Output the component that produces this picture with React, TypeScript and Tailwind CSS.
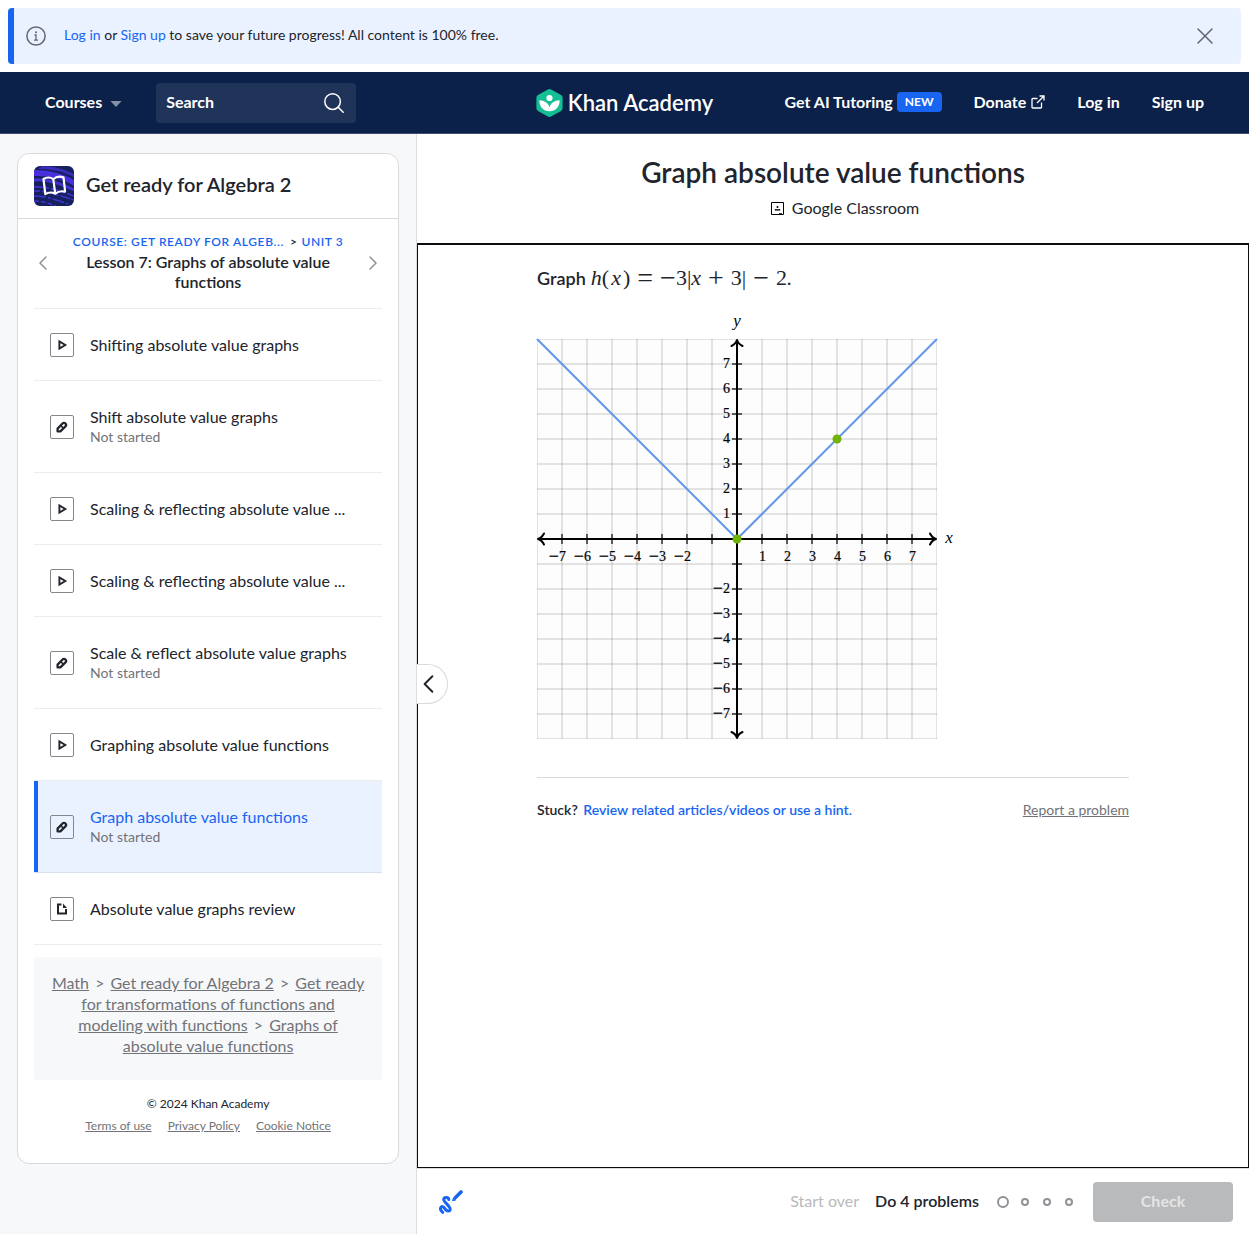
import React from "react";

type Kind = "video" | "exercise" | "article";

interface Lesson {
  title: string;
  kind: Kind;
  status?: string;
  active?: boolean;
}

const lessons: Lesson[] = [
  { title: "Shifting absolute value graphs", kind: "video" },
  { title: "Shift absolute value graphs", kind: "exercise", status: "Not started" },
  { title: "Scaling & reflecting absolute value ...", kind: "video" },
  { title: "Scaling & reflecting absolute value ...", kind: "video" },
  { title: "Scale & reflect absolute value graphs", kind: "exercise", status: "Not started" },
  { title: "Graphing absolute value functions", kind: "video" },
  { title: "Graph absolute value functions", kind: "exercise", status: "Not started", active: true },
  { title: "Absolute value graphs review", kind: "article" },
];

function Banner() {
  return (
    <div className="p-2">
      <div className="flex h-14 items-center rounded border-l-[6px] border-[#1865f2] bg-[#ebf2ff] pl-3 pr-6">
        <svg className="mr-[18px] size-5 shrink-0" viewBox="0 0 20 20" fill="none" stroke="#63656c" aria-hidden="true">
          <circle cx="10" cy="10" r="9.1" strokeWidth="1.5" />
          <path d="M8.5 9H10v5M8 14.2h4" strokeWidth="1.3" />
          <circle cx="10" cy="6.2" r="1" fill="#63656c" stroke="none" />
        </svg>
        <p className="flex-1 pb-0.5 text-sm">
          <a href="#login" className="text-[#1865f2]">Log in</a> or{" "}
          <a href="#signup" className="text-[#1865f2]">Sign up</a> to save your future progress! All content is 100% free.
        </p>
        <button aria-label="Dismiss" className="flex size-6 items-center justify-center">
          <svg className="size-4" viewBox="0 0 16 16" fill="none" stroke="#63656c" strokeWidth="1.5" strokeLinecap="round" aria-hidden="true">
            <path d="M1 1l14 14M15 1L1 15" />
          </svg>
        </button>
      </div>
    </div>
  );
}

function Header() {
  return (
    <header className="grid h-[62px] grid-cols-[1fr_auto_1fr] items-center border-b border-[#3d4d6e] bg-[#0c2149] px-[45px] text-base font-bold text-white">
      <div className="flex items-center">
        <button className="flex items-center gap-2 pb-0.5 font-bold">
          Courses
          <svg className="mt-1 h-[6px] w-3" viewBox="0 0 12 6" fill="#8590a4" aria-hidden="true">
            <path d="M0.4 0h11.2L6.5 5.6a.7.7 0 0 1-1 0z" />
          </svg>
        </button>
        <div className="ml-[34px] flex h-10 w-[200px] items-center rounded bg-[#203358] pl-[10px] pr-3">
          <input
            type="text"
            aria-label="Search"
            placeholder="Search"
            className="min-w-0 flex-1 bg-transparent pb-0.5 font-bold text-white outline-none placeholder:text-white"
          />
          <svg className="size-5" viewBox="0 0 20 20" fill="none" stroke="#fff" strokeWidth="1.5" strokeLinecap="round" aria-hidden="true">
            <circle cx="8.6" cy="8.6" r="7.8" />
            <path d="M14.2 14.2l5 5" />
          </svg>
        </div>
      </div>
      <a href="#home" className="flex items-center gap-[5px] text-[22px] font-semibold leading-7">
        <svg className="h-[28px] w-[27px]" viewBox="0 0 27 28" aria-hidden="true">
          <path d="M11.9 .5a3.2 3.2 0 0 1 3.2 0L25 6.1a3 3 0 0 1 1.6 2.7v10.4a3 3 0 0 1-1.6 2.7l-9.9 5.6a3.2 3.2 0 0 1-3.2 0L2 21.9A3 3 0 0 1 .4 19.200V8.800A3 3 0 0 1 2 6.100z" fill="#14bf96" />
          <circle cx="13.500" cy="9" r="3.100" fill="#fff" />
          <path d="M23.600 11.300c.4 6.200-3.900 11-10.100 11S3 17.500 3.400 11.300c5 .2 9 2.700 10.100 7.200 1.100-4.500 5.100-7 10.100-7.200z" fill="#fff" />
        </svg>
        Khan Academy
      </a>
      <nav className="flex items-center justify-end gap-8 pb-0.5">
        <a href="#tutoring" className="flex items-center gap-1">
          Get AI Tutoring
          <span className="rounded bg-[#1865f2] px-2 text-xs leading-5">NEW</span>
        </a>
        <a href="#donate" className="flex items-center gap-[5px]">
          Donate
          <svg className="size-[14px]" viewBox="0 0 14 14" fill="none" stroke="#fff" strokeWidth="1.300" aria-hidden="true">
            <path d="M6.500 3.500H1.700a.7.700 0 0 0-.7.700v8.100a.7.700 0 0 0 .7.700h8.100a.7.700 0 0 0 .7-.7V7.500M8.500 1H13v4.500M13 1L6 8" />
          </svg>
        </a>
        <a href="#login">Log in</a>
        <a href="#signup">Sign up</a>
      </nav>
    </header>
  );
}

function CourseIcon() {
  return (
    <svg className="size-10 shrink-0 rounded-md" viewBox="0 0 40 40" aria-hidden="true">
      <rect width="40" height="40" fill="#14215c" />
      <path d="M0 4c14 0 28 3 40 10v6C28 12 14 10 0 10z" fill="#4a30dd" />
      <path d="M8 0c12 0 22 3 32 8v3C28 5 16 3 4 3z" fill="#3a2bb8" />
      <g fill="none" stroke="#4430cf" strokeWidth="1.600">
        <path d="M0 14c10-1 24 2 40 10" strokeWidth="3" />
        <path d="M0 21c12-1 26 4 40 9" strokeDasharray="9 1 5 2" />
        <path d="M0 25c12 0 24 4 40 9" strokeDasharray="6 2 10 1" />
        <path d="M0 30c10 0 20 3 34 8" strokeDasharray="12 2 3 2" />
        <path d="M0 35c8 0 14 2 22 5" strokeDasharray="5 2" />
      </g>
      <path d="M9.500 13.500c3-1.800 7-1.800 9.800.2 2.600-2.400 6.400-3.200 10.200-1.800l1.600 14.300c-3.600-1-7-.3-9.800 2-3.200-1.700-6.700-1.500-10 .4zM19.300 13.700l1.900 14.500" transform="translate(0 -.5)" fill="none" stroke="#fff" strokeWidth="2.200" strokeLinejoin="round" />
    </svg>
  );
}

function KindIcon({ kind }: { kind: Kind }) {
  return (
    <span className="flex size-6 shrink-0 items-center justify-center rounded-xs border border-[#85878c]">
      <svg className="size-3" viewBox="0 0 12 12" fill="none" stroke="#21242c" strokeWidth="2" aria-hidden="true">
        {kind === "video" && <path d="M3.400 2.500v7L9.300 6z" strokeWidth="1.900" />}
        {kind === "exercise" && (
          <>
            <path d="M1.600 10.400V7.600l5.200-5.300a1.600 1.600 0 0 1 2.300 0l.6.6a1.600 1.600 0 0 1 0 2.300l-5.300 5.200z" strokeWidth="2.300" strokeLinejoin="round" />
            <path d="M4.800 4.600l2.600 2.600" strokeWidth="1.500" />
          </>
        )}
        {kind === "article" && (
          <>
            <path d="M5.500 1.500H2v9h8V6" />
            <path d="M7 .5L11 5H7z" fill="#21242c" stroke="none" />
          </>
        )}
      </svg>
    </span>
  );
}

function Chevron({ left, className }: { left?: boolean; className: string }) {
  return (
    <svg className={className} viewBox="0 0 8 14" fill="none" stroke="currentColor" strokeWidth="1.500" strokeLinecap="round" strokeLinejoin="round" aria-hidden="true">
      <path d={left ? "M7 1L1 7l6 6" : "M1 1l6 6-6 6"} />
    </svg>
  );
}

function Separator() {
  return <span className="mx-0.5">&gt;</span>;
}

function Sidebar() {
  return (
    <aside className="w-[33.4%] shrink-0 border-r border-[#dcdde0] bg-[#f7f8fa] px-[17px] pb-16 pt-[19px]">
      <div className="rounded-xl border border-[#d8dadd] bg-white pb-[26px]">
        <div className="flex h-[65px] items-center gap-3 border-b border-[#d8dadd] px-4">
          <CourseIcon />
          <h2 className="pb-1 text-xl font-semibold">Get ready for Algebra 2</h2>
        </div>
        <div className="px-4">
          <div className="flex h-[89px] items-center justify-between px-[5px] pb-0.5 text-[#909298]">
            <button aria-label="Previous lesson"><Chevron left className="h-[14px] w-2" /></button>
            <div className="w-[276px] pb-0.5 text-center text-base font-semibold leading-5 text-[#21242c]">
              <div className="whitespace-nowrap text-xs leading-5 tracking-wider">
                <a href="#course" className="text-[#1865f2]">COURSE: GET READY FOR ALGEB...</a>
                <span className="ml-1.5 mr-1">&gt;</span>
                <a href="#unit" className="text-[#1865f2]">UNIT 3</a>
              </div>
              Lesson 7: Graphs of absolute value functions
            </div>
            <button aria-label="Next lesson"><Chevron className="h-[14px] w-2" /></button>
          </div>
          <ul className="border-t border-[#ececee]">
            {lessons.map((l, i) => (
              <li
                key={i}
                className={
                  l.active
                    ? "border-b border-[#d8dfee] bg-[#ebf2ff] shadow-[inset_4px_0_0_#1865f2]"
                    : "border-b border-[#ececee]"
                }
              >
                <a
                  href={"#lesson-" + i}
                  className={l.status ? "flex min-h-[91px] items-center gap-4 px-4" : "flex min-h-[71px] items-center gap-4 px-4"}
                >
                  <KindIcon kind={l.kind} />
                  <span className="min-w-0 flex-1 whitespace-nowrap">
                    <span className={l.active ? "block text-base leading-5 text-[#1865f2]" : "block text-base leading-5"}>{l.title}</span>
                    {l.status && <span className="block text-sm leading-5 text-[#717378]">{l.status}</span>}
                  </span>
                </a>
              </li>
            ))}
          </ul>
          <nav aria-label="Breadcrumb" className="mt-3 rounded bg-[#f7f8fa] px-4 pb-6 pt-[15px] text-center text-base leading-[21px] text-[#717378]">
            <a href="#math" className="underline">Math</a> <Separator />{" "}
            <a href="#algebra" className="underline">Get ready for Algebra 2</a> <Separator />{" "}
            <a href="#transformations" className="underline">Get ready for transformations of functions and modeling with functions</a>{" "}
            <Separator /> <a href="#graphs" className="underline">Graphs of absolute value functions</a>
          </nav>
          <footer className="mt-[13px] text-center text-xs leading-[22px]">
            <p>© 2024 Khan Academy</p>
            <div className="flex justify-center gap-4 text-[#717378]">
              <a href="#terms" className="underline">Terms of use</a>
              <a href="#privacy" className="underline">Privacy Policy</a>
              <a href="#cookies" className="underline">Cookie Notice</a>
            </div>
          </footer>
        </div>
      </div>
    </aside>
  );
}

const gridLines = Array.from({ length: 17 }, (_, i) => i * 25);
const ticks = [-7, -6, -5, -4, -3, -2, -1, 1, 2, 3, 4, 5, 6, 7];
const labelled = ticks.filter((n) => n !== -1);

function Num({ n }: { n: number }) {
  return (
    <>
      {n < 0 && <tspan fontSize="18" dy="1">−</tspan>}
      <tspan dy={n < 0 ? -1 : 0}>{Math.abs(n)}</tspan>
    </>
  );
}

function Graph() {
  return (
    <svg
      className="mt-[46px] block size-[400px] overflow-visible"
      viewBox="0 0 400 400"
      role="img"
      aria-label="Coordinate plane with an absolute value graph"
      fontFamily="'Liberation Serif', serif"
    >
      <rect width="400" height="400" fill="#fdfdfd" />
      <svg width="400" height="400">
        <g stroke="#000" strokeOpacity=".1" strokeWidth="2">
          {gridLines.map((p) => (
            <React.Fragment key={p}>
              <path d={`M${p} 0V400`} />
              <path d={`M0 ${p}H400`} />
            </React.Fragment>
          ))}
        </g>
      </svg>
      <g stroke="#000" strokeWidth="2" fill="none">
        <path d="M1 200H399M200 1V399" />
        <g strokeLinecap="round" strokeLinejoin="round">
          <path d="M7 194.500C5.500 197.500 3.500 199.300 1 200c2.500.7 4.500 2.500 6 5.500" />
          <path d="M393 194.500c1.500 3 3.500 4.800 6 5.500-2.500.7-4.500 2.500-6 5.500" />
          <path d="M194.500 7c3-1.500 4.800-3.500 5.500-6 .7 2.500 2.500 4.500 5.500 6" />
          <path d="M194.500 393c3 1.500 4.800 3.500 5.500 6 .7-2.500 2.500-4.500 5.500-6" />
        </g>
        <g strokeOpacity=".6">
          {ticks.map((t) => (
            <React.Fragment key={t}>
              <path d={`M${200 + t * 25} 195v10`} />
              <path d={`M195 ${200 + t * 25}h10`} />
            </React.Fragment>
          ))}
        </g>
      </g>
      <g fontSize="14" fill="#000" stroke="#000" strokeWidth=".2">
        {labelled.map((n) => (
          <React.Fragment key={n}>
            <text x={204 + n * 25} y="222" textAnchor="end"><Num n={n} /></text>
            <text x="193" y={204 - n * 25} textAnchor="end"><Num n={n} /></text>
          </React.Fragment>
        ))}
      </g>
      <g fontSize="17" fontStyle="italic" textAnchor="middle">
        <text x="200" y="-13">y</text>
        <text x="412" y="204">x</text>
      </g>
      <path d="M0 0L200 200L400 0" fill="none" stroke="#6495ed" strokeWidth="2" />
      <circle cx="200" cy="200" r="4.500" fill="#71b307" />
      <circle cx="300" cy="100" r="4.500" fill="#71b307" />
    </svg>
  );
}

function Op({ children }: { children: string }) {
  return <span className="mx-[7px] self-center text-[28px] leading-none">{children}</span>;
}

function Exercise() {
  return (
    <div className="relative flex-1 border-b border-l border-r border-t-2 border-[#0b0c0f]">
      <button
        aria-label="Collapse sidebar"
        className="absolute -left-px top-[419px] flex h-10 w-[31px] items-center rounded-r-[20px] border border-l-0 border-[#d8dadd] bg-white pl-[6px]"
      >
        <Chevron left className="h-[18px] w-[11px]" />
      </button>
      <div className="mx-auto max-w-[592px]">
        <p className="mt-[18px] flex h-[30px] items-center whitespace-nowrap text-lg font-semibold">
          Graph
          <span className="ml-[5px] flex items-baseline font-['Liberation_Serif',serif] text-[22px] font-normal leading-[30px]">
            <i>h</i>(<i className="px-0.5">x</i>)<Op>=</Op>
            <span className="self-center text-[28px] leading-none">−</span>3|<i>x</i>
            <Op>+</Op>3|<Op>−</Op>2
            <span className="font-[Lato] text-lg font-semibold">.</span>
          </span>
        </p>
        <Graph />
        <div className="mt-[38px] flex items-center justify-between border-t border-[#d8dadd] pt-[22px] text-sm leading-5">
          <p className="font-semibold">
            Stuck? <a href="#hint" className="ml-0.5 text-[#1865f2]">Review related articles/videos or use a hint.</a>
          </p>
          <a href="#report" className="text-[#717378] underline">Report a problem</a>
        </div>
      </div>
    </div>
  );
}

function TaskBar() {
  return (
    <div className="flex h-[66px] items-center border-t border-[#dcdde0] pl-[22px] pr-4 text-base">
      <button aria-label="Show scratchpad">
        <svg className="size-6" viewBox="0 0 24 24" fill="none" stroke="#1865f2" strokeLinecap="round" strokeLinejoin="round" aria-hidden="true">
          <path d="M9.800 9.500C9.800 7 5 6.700 4.700 9.500c-.2 2.400 6.800 6.800 6.500 9.800-.3 2.500-3.400 2-4.700.2-1.400-2-3-3.900-4.500-2.200-1.100 1.500 0 3.600 1.700 5" strokeWidth="3" />
          <path d="M22 2l-5.500 5.500" strokeWidth="3.600" />
          <path d="M14.500 8l-.8 2.600 2.700-.8z" strokeWidth="1.200" />
        </svg>
      </button>
      <span className="ml-auto pb-px text-[#b8babc]">Start over</span>
      <span className="ml-4 pb-px font-semibold">Do 4 problems</span>
      <div className="ml-[18px] flex items-center gap-[14px]">
        <span className="-mr-0.5 size-3 rounded-full border-2 border-[#909298]" />
        <span className="size-2 rounded-full border-2 border-[#909298]" />
        <span className="size-2 rounded-full border-2 border-[#909298]" />
        <span className="size-2 rounded-full border-2 border-[#909298]" />
      </div>
      <button className="ml-5 h-10 w-[140px] rounded bg-[#b8babc] pb-0.5 font-bold text-[#e4e5e6]" disabled>
        Check
      </button>
    </div>
  );
}

export default function App() {
  return (
    <div className="flex min-h-screen flex-col bg-white font-['Lato',sans-serif] text-[#21242c]">
      <Banner />
      <Header />
      <div className="flex flex-1">
        <Sidebar />
        <main className="flex min-w-0 flex-1 flex-col">
          <div className="flex h-[109px] flex-col items-center pt-5">
            <h1 className="text-[28px] font-semibold leading-9">Graph absolute value functions</h1>
            <button className="ml-6 mt-1.5 flex items-center gap-2 text-base leading-6">
              <svg className="size-[13px]" viewBox="0 0 13 13" fill="none" stroke="#000" aria-hidden="true">
                <path d="M.5.5h12v12H.5z" />
                <path d="M4 8.200V7.500h5v.700zM8 11.500h3" strokeWidth=".8" />
                <circle cx="6.500" cy="5" r="1" fill="#000" stroke="none" />
              </svg>
              Google Classroom
            </button>
          </div>
          <Exercise />
          <TaskBar />
        </main>
      </div>
    </div>
  );
}
